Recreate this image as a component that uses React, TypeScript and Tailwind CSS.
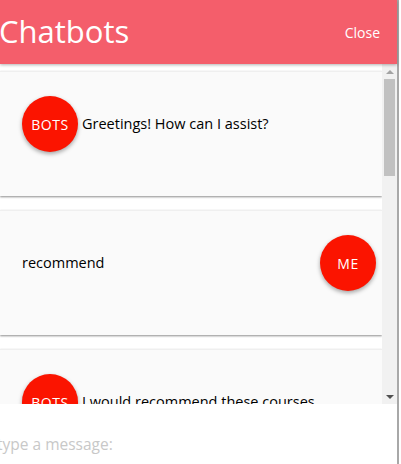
import React from "react"

const font = { fontFamily: '"Open Sans", "Noto Sans", sans-serif' }

const Avatar = ({ label }: { label: string }) => (
  <div className="w-[56px] h-[56px] shrink-0 rounded-full bg-[#fb1400] text-white text-[14px] tracking-[0.5px] flex items-center justify-center shadow-[0_2px_4px_rgba(0,0,0,0.35)]">
    {label}
  </div>
)

const Card = ({ children, className }: { children: React.ReactNode; className?: string }) => (
  <div className="h-[125px] shrink-0 bg-[#fafafa] border-t border-[#efefef] shadow-[0_1px_2px_rgba(0,0,0,0.45)] pt-[24px] px-[22px]">
    <div className={"h-[56px] flex items-center " + (className ?? "")}>{children}</div>
  </div>
)

export default function App() {
  return (
    <div className="w-[401px] h-[464px] flex bg-white overflow-hidden" style={font}>
      <div className="w-[397px] h-full flex flex-col">
        <header className="h-[64px] shrink-0 bg-[#f45e6b] flex items-center justify-between pr-[17px] shadow-[0_1px_3px_rgba(0,0,0,0.3)] relative z-10">
          <h1 className="text-[31px] text-white leading-none -ml-[1px] -mt-[1px]">Chatbots</h1>
          <button className="text-white text-[14px]">Close</button>
        </header>
        <div className="flex-1 flex min-h-0">
          <div className="flex-1 overflow-hidden flex flex-col gap-[14px] pt-[7px]">
            <Card>
              <Avatar label="BOTS" />
              <span className="text-[14.5px] text-black ml-[4px]">Greetings! How can I assist?</span>
            </Card>
            <Card className="justify-between -mr-[16px]">
              <span className="text-[14.5px] text-black">recommend</span>
              <Avatar label="ME" />
            </Card>
            <Card>
              <Avatar label="BOTS" />
              <span className="text-[14.5px] text-black ml-[4px]">I would recommend these courses</span>
            </Card>
          </div>
          <div className="w-[15px] shrink-0 bg-[#f1f1f1] flex flex-col items-center">
            <div className="h-[15px] flex items-center justify-center">
              <div className="w-0 h-0 border-l-[4px] border-r-[4px] border-b-[4px] border-l-transparent border-r-transparent border-b-[#a3a3a3]" />
            </div>
            <div className="w-[11px] h-[97px] bg-[#c1c1c1]" />
            <div className="flex-1" />
            <div className="h-[15px] flex items-center justify-center">
              <div className="w-0 h-0 border-l-[4px] border-r-[4px] border-t-[4px] border-l-transparent border-r-transparent border-t-[#505050]" />
            </div>
          </div>
        </div>
        <div className="h-[60px] shrink-0 bg-white flex items-center relative z-10">
          <input
            className="w-full h-full pt-[20px] -ml-[3px] outline-none text-[15.5px] placeholder:text-[#c8c8c8] bg-white"
            placeholder="type a message:"
            style={font}
          />
        </div>
      </div>
      <div className="w-[2px] h-full bg-[#a8a8a8]" />
      <div className="w-[2px] h-full bg-white" />
    </div>
  )
}
